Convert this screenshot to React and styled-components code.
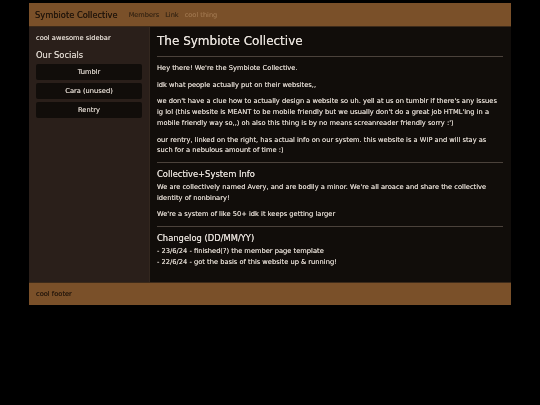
import React from 'react';
import styled, { createGlobalStyle } from 'styled-components';

const Global = createGlobalStyle`
  html, body {
    margin: 0;
    padding: 0;
    background: #000;
    font-family: "DejaVu Sans", Verdana, sans-serif;
  }
  * { box-sizing: border-box; }
`;

// a near-zero filter renders the page offscreen, so the tiny text gets grayscale antialiasing;
// the soft shadow thickens the strokes a touch
const Page = styled.div`
  width: 482px;
  margin: 3px 0 0 29px;
  display: flex;
  flex-direction: column;
  filter: grayscale(0.01);
  text-shadow: 0 0 0.4px;
`;

const Header = styled.header`
  display: flex;
  align-items: center;
  gap: 6px;
  height: 24px;
  padding: 0 6px;
  background: #7a5029;
  border-bottom: 1px solid #3c2a1a;
`;

const Title = styled.span`
  font-size: 8.3px;
  color: #24170c;
  margin-right: 5px;
`;

const NavLink = styled.a`
  font-size: 6.6px;
  text-decoration: none;
  color: ${p => (p.$faded ? '#9a7149' : '#3f2a16')};
`;

const Body = styled.div`
  display: flex;
`;

const Sidebar = styled.aside`
  width: 121px;
  flex-shrink: 0;
  padding: 6px 7px;
  background: #2a1f1a;
  border-right: 1px solid #33271f;
  color: #d8d0c8;
`;

const Small = styled.p`
  margin: 0 0 6.3px;
  font-size: 6.7px;
  line-height: 10.7px;
`;

const SideHeading = styled.h3`
  margin: 0 0 3.3px;
  font-size: 8.4px;
  font-weight: normal;
  line-height: 11px;
`;

const SocialList = styled.div`
  display: flex;
  flex-direction: column;
  gap: 3px;
`;

const Social = styled.div`
  display: flex;
  align-items: center;
  justify-content: center;
  height: 16px;
  background: #110d0a;
  border-radius: 2px;
  color: #d2cac2;
  font-size: 6.7px;
  cursor: pointer;
`;

const Main = styled.main`
  flex: 1;
  padding: 6px 8px 6px 7px;
  background: #110d0a;
  color: #dad2ca;
`;

const H1 = styled.h1`
  margin: 0 0 5.5px;
  font-size: 12px;
  font-weight: normal;
  line-height: 17px;
  color: #e6e0da;
`;

const H2 = styled.h2`
  margin: 6px 0 2px;
  font-size: 8.4px;
  font-weight: normal;
  line-height: 11px;
  color: #e2dcd6;
`;

const P = styled.p`
  margin: ${p => (p.$tight ? '0' : '6px')} 0 6px;
  font-size: 6.7px;
  line-height: 10.7px;
`;

const Rule = styled.hr`
  margin: 6px 0;
  border: 0;
  height: 1px;
  background: #4b423b;
`;

const Lines = styled.div`
  font-size: 6.7px;
  line-height: 10.7px;
  margin-bottom: 9px;
`;

const Footer = styled.footer`
  height: 23px;
  display: flex;
  align-items: center;
  padding: 0 7px;
  background: #7a5029;
  border-top: 1px solid #3c2a1a;
  color: #2b1b0e;
  font-size: 6.7px;
`;

export default function App() {
  return (
    <>
      <Global />
      <Page>
        <Header>
          <Title>Symbiote Collective</Title>
          <NavLink href="#">Members</NavLink>
          <NavLink href="#">Link</NavLink>
          <NavLink href="#" $faded>cool thing</NavLink>
        </Header>
        <Body>
          <Sidebar>
            <Small>cool awesome sidebar</Small>
            <SideHeading>Our Socials</SideHeading>
            <SocialList>
              <Social>Tumblr</Social>
              <Social>Cara (unused)</Social>
              <Social>Rentry</Social>
            </SocialList>
          </Sidebar>
          <Main>
            <H1>The Symbiote Collective</H1>
            <Rule />
            <P>Hey there! We're the Symbiote Collective.</P>
            <P>idk what people actually put on their websites,,</P>
            <P>
              we don't have a clue how to actually design a website so uh. yell at us on tumblr if there's any issues
              ig lol (this website is MEANT to be mobile friendly but we usually don't do a great job HTML'ing in a
              mobile friendly way so,,) oh also this thing is by no means screanreader friendly sorry :')
            </P>
            <P>
              our rentry, linked on the right, has actual info on our system. this website is a WIP and will stay as
              such for a nebulous amount of time :)
            </P>
            <Rule />
            <H2>Collective+System Info</H2>
            <P $tight>
              We are collectively named Avery, and are bodily a minor. We're all aroace and share the collective
              identity of nonbinary!
            </P>
            <P>We're a system of like 50+ idk it keeps getting larger</P>
            <Rule />
            <H2>Changelog (DD/MM/YY)</H2>
            <Lines>
              - 23/6/24 - finished(?) the member page template
              <br />
              - 22/6/24 - got the basis of this website up &amp; running!
            </Lines>
          </Main>
        </Body>
        <Footer>cool footer</Footer>
      </Page>
    </>
  );
}
